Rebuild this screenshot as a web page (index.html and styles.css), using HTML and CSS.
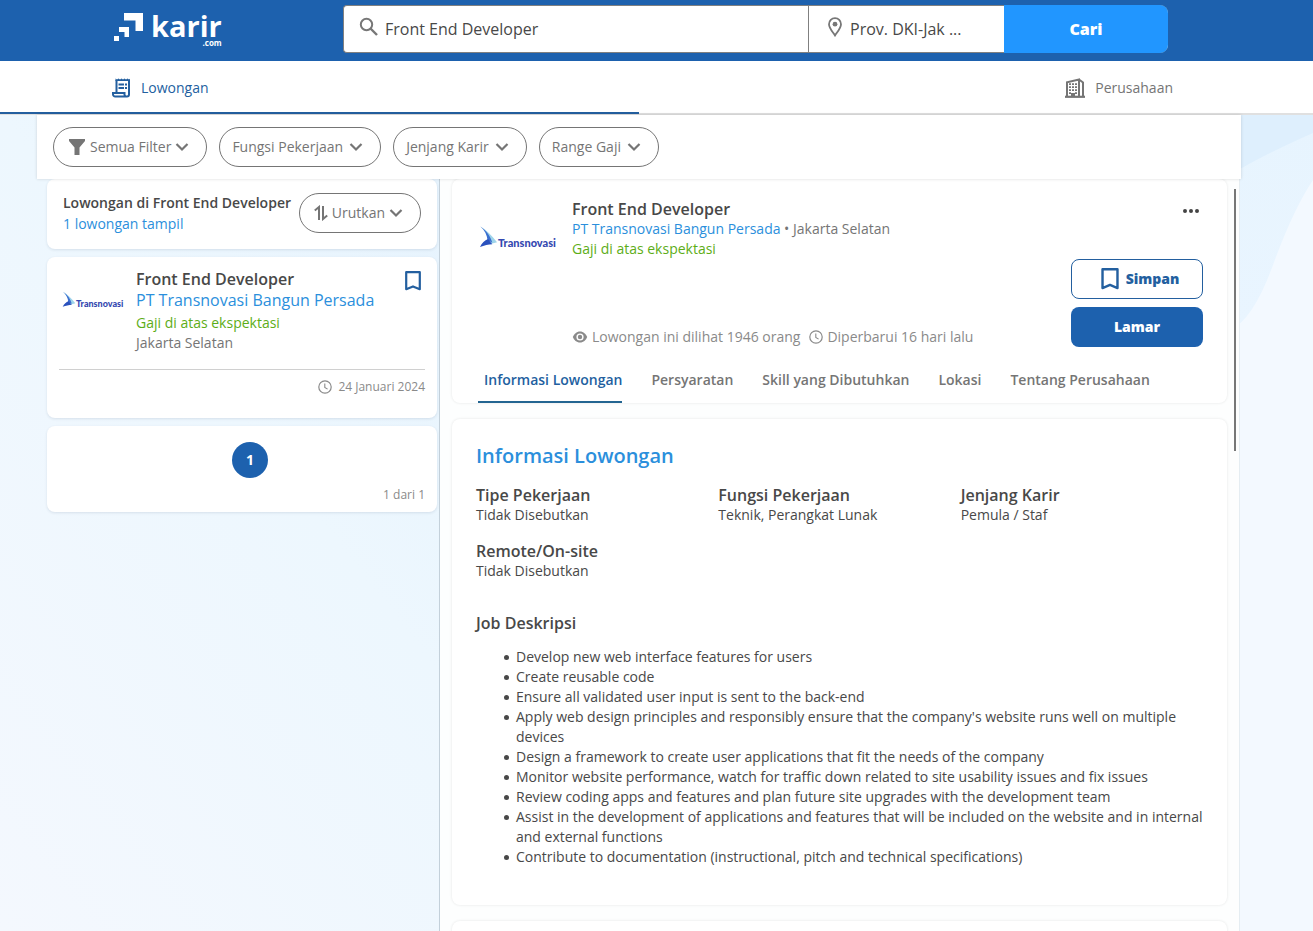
FILE: index.html
```html
<!DOCTYPE html>
<html lang="id">
<head>
<meta charset="utf-8">
<meta name="viewport" content="width=device-width, initial-scale=1">
<title>Karir.com - Lowongan Front End Developer</title>
<link rel="stylesheet" href="styles.css">
</head>
<body>
<svg class="symbols" aria-hidden="true">
  <symbol id="chevron" viewBox="0 0 14 14"><path d="M1.500 4l5.500 5.500L12.500 4" fill="none" stroke="currentColor" stroke-width="2.200"/></symbol>
  <symbol id="clock" viewBox="0 0 14 14"><circle cx="7" cy="7" r="6.200" fill="none" stroke="currentColor" stroke-width="1.200"/><path d="M6.800 3.400v4l2.800 1.700" fill="none" stroke="currentColor" stroke-width="1.100"/></symbol>
  <symbol id="bookmark" viewBox="0 0 16 20"><path d="M1.200 1.200h13.600v17L8 15.400l-6.800 2.800z" fill="none" stroke="currentColor" stroke-width="2.200" stroke-linejoin="round"/></symbol>
  <symbol id="company-mark" viewBox="0 0 20 24">
    <path d="M1.500 1C8 5 13.500 10.500 19 17.500L13 19C11 11 7 6 1.500 1z" fill="#9fd4ea"/>
    <path d="M1.500 1C8 5.500 12 11 14 18l-5-2.500C8.500 10 6 5 1.500 1z" fill="#3a6fd0"/>
    <path d="M1 22.500c2-4.500 5-7 8.500-8.500l4.500 5.500c-4 .2-8.500 1.200-13 3z" fill="#2a51bd"/>
  </symbol>
</svg>

<header class="topbar">
  <a class="brand" href="#" aria-label="karir.com">
    <svg class="brand-mark" viewBox="0 0 29 29" aria-hidden="true"><path d="M10 0h19v18h-7.500V7.500H10zM5 14h10v10h-4.500v-5H5zM0 23h5v5H0z" fill="#fff"/></svg>
    <span class="brand-name">karir<small class="brand-tld">.com</small></span>
  </a>
  <form class="search">
    <label class="field field-job">
      <svg width="20" height="20" viewBox="0 0 20 20" aria-hidden="true"><circle cx="7.500" cy="7.500" r="5.700" fill="none" stroke="#777" stroke-width="2"/><path d="M11.500 11.500l6.500 6.500" stroke="#777" stroke-width="2.400"/></svg>
      <input type="text" value="Front End Developer" aria-label="Pekerjaan">
    </label>
    <label class="field field-place">
      <svg width="16" height="20" viewBox="0 0 16 20" aria-hidden="true"><path d="M8 1.200a6 6 0 0 1 6 6c0 4-4 8-6 11.200C6 15.200 2 11.200 2 7.200a6 6 0 0 1 6-6z" fill="none" stroke="#777" stroke-width="1.800"/><circle cx="8" cy="7.200" r="2.400" fill="#777"/></svg>
      <input type="text" value="Prov. DKI-Jak ..." aria-label="Lokasi">
    </label>
    <button class="search-button" type="button">Cari</button>
  </form>
</header>

<nav class="tabs">
  <a class="tab tab-active" href="#">
    <svg width="20" height="20" viewBox="0 0 20 20" aria-hidden="true"><path d="M4.500 15V2M17 2v14.500a2 2 0 0 1-2 2H3.200A2.200 2.200 0 0 1 1 16.300V15h11.500v1.500a2 2 0 0 0 2.500 2" fill="none" stroke="currentColor" stroke-width="2"/><path d="M3.500 3V.5l1.500 1 1.500-1 1.500 1 1.500-1 1.500 1 1.500-1 1.500 1 1.500-1 1.500 1 1-.8V3z" fill="currentColor"/><path d="M6.500 6.500h5.500M6.500 10h5.500M13 6.500h2M13 10h2" stroke="currentColor" stroke-width="1.800"/></svg>
    Lowongan
  </a>
  <a class="tab tab-right" href="#">
    <svg width="22" height="20" viewBox="0 0 22 20" aria-hidden="true"><path d="M3 18V4.200L15 1.500V18M15 1.500l4 3V18" fill="none" stroke="currentColor" stroke-width="2"/><path d="M1 18.800h20" stroke="currentColor" stroke-width="2.200"/><path d="M5 6.200h8M5 9.200h8M5 12.200h8M5 15.200h2M11 15.200h2" stroke="currentColor" stroke-width="1.800" stroke-dasharray="2 1"/><path d="M7 18v-3h4v3z" fill="currentColor"/></svg>
    Perusahaan
  </a>
</nav>

<main class="page">
  <svg class="backdrop" viewBox="0 0 1313 816" preserveAspectRatio="none" aria-hidden="true">
    <defs>
      <linearGradient id="left-sky" x1="1" y1="0" x2="0" y2="1"><stop offset="0" stop-color="#e2f1fd"/><stop offset=".5" stop-color="#edf7fe"/><stop offset="1" stop-color="#f4f8fe"/></linearGradient>
      <linearGradient id="right-sky" x1="0" y1="0" x2="0" y2="1"><stop offset="0" stop-color="#e7f4fe"/><stop offset="1" stop-color="#e9f5ff"/></linearGradient>
    </defs>
    <rect width="640" height="816" fill="url(#left-sky)"/>
    <rect x="640" width="673" height="816" fill="#f3f9ff"/>
    <path d="M1230 0h83v65q-20 30-40 85t-43 65z" fill="url(#right-sky)"/>
    <path d="M1230 0h83v18q-50 22-83 42z" fill="#deeffd"/>
  </svg>

  <div class="filters">
    <button class="pill" type="button"><svg width="18" height="18" viewBox="0 0 18 18" aria-hidden="true"><path d="M1 1h16v2l-5.500 6.500V17h-5V9.500L1 3z" fill="currentColor"/></svg>Semua Filter<svg class="chev" aria-hidden="true"><use href="#chevron"/></svg></button>
    <button class="pill" type="button">Fungsi Pekerjaan<svg class="chev" aria-hidden="true"><use href="#chevron"/></svg></button>
    <button class="pill" type="button">Jenjang Karir<svg class="chev" aria-hidden="true"><use href="#chevron"/></svg></button>
    <button class="pill" type="button">Range Gaji<svg class="chev" aria-hidden="true"><use href="#chevron"/></svg></button>
  </div>

  <div class="columns">
    <section class="list">
      <div class="card list-head">
        <div class="list-title">
          <h2>Lowongan di Front End Developer</h2>
          <p class="link">1 lowongan tampil</p>
        </div>
        <button class="pill" type="button"><svg width="14" height="16" viewBox="0 0 14 16" aria-hidden="true"><path d="M5 15V2L.8 5.500M9 1v13l4.200-3.500" fill="none" stroke="currentColor" stroke-width="2"/></svg>Urutkan<svg class="chev" aria-hidden="true"><use href="#chevron"/></svg></button>
      </div>

      <article class="card job">
        <div class="job-body">
          <div class="company-logo company-logo-small"><svg aria-hidden="true"><use href="#company-mark"/></svg><span>Transnovasi</span></div>
          <div class="job-text">
            <h3>Front End Developer</h3>
            <a class="job-company" href="#">PT Transnovasi Bangun Persada</a>
            <p class="salary">Gaji di atas ekspektasi</p>
            <p class="muted">Jakarta Selatan</p>
          </div>
          <button class="icon-button" type="button" aria-label="Simpan lowongan"><svg width="16" height="20" aria-hidden="true"><use href="#bookmark"/></svg></button>
        </div>
        <p class="job-date"><svg width="14" height="14" aria-hidden="true"><use href="#clock"/></svg>24 Januari 2024</p>
      </article>

      <div class="card pager">
        <button class="page-number" type="button">1</button>
        <p class="page-total">1 dari 1</p>
      </div>
    </section>

    <section class="detail">
      <div class="panel summary">
        <div class="summary-main">
          <div class="company-logo"><svg aria-hidden="true"><use href="#company-mark"/></svg><span>Transnovasi</span></div>
          <div class="summary-text">
            <h1>Front End Developer</h1>
            <p class="muted"><a class="link" href="#">PT Transnovasi Bangun Persada</a> • Jakarta Selatan</p>
            <p class="salary">Gaji di atas ekspektasi</p>
            <p class="stats">
              <svg width="16" height="14" viewBox="0 0 16 14" aria-hidden="true"><path d="M8 1.500C4.500 1.500 2 4 .8 7 2 10 4.500 12.500 8 12.500S14 10 15.200 7C14 4 11.500 1.500 8 1.500z" fill="currentColor"/><circle cx="8" cy="7" r="3.600" fill="#fff"/><circle cx="8" cy="7" r="2.200" fill="currentColor"/></svg>
              <span>Lowongan ini dilihat 1946 orang</span>
              <svg width="14" height="14" aria-hidden="true"><use href="#clock"/></svg>
              <span>Diperbarui 16 hari lalu</span>
            </p>
          </div>
          <div class="actions">
            <button class="more" type="button" aria-label="Opsi lainnya"><svg width="18" height="4" viewBox="0 0 18 4" aria-hidden="true"><path d="M3 2h0M9 2h0M15 2h0" stroke="#444" stroke-width="4" stroke-linecap="round"/></svg></button>
            <button class="save" type="button"><svg width="18" height="22" aria-hidden="true"><use href="#bookmark"/></svg>Simpan</button>
            <button class="apply" type="button">Lamar</button>
          </div>
        </div>
        <nav class="sections">
          <a class="section-active" href="#info">Informasi Lowongan</a>
          <a href="#">Persyaratan</a>
          <a href="#">Skill yang Dibutuhkan</a>
          <a href="#">Lokasi</a>
          <a href="#">Tentang Perusahaan</a>
        </nav>
      </div>

      <div class="panel info" id="info">
        <h2>Informasi Lowongan</h2>
        <dl class="facts">
          <div><dt>Tipe Pekerjaan</dt><dd>Tidak Disebutkan</dd></div>
          <div><dt>Fungsi Pekerjaan</dt><dd>Teknik, Perangkat Lunak</dd></div>
          <div><dt>Jenjang Karir</dt><dd>Pemula / Staf</dd></div>
          <div><dt>Remote/On-site</dt><dd>Tidak Disebutkan</dd></div>
        </dl>
        <h3>Job Deskripsi</h3>
        <ul>
          <li>Develop new web interface features for users</li>
          <li>Create reusable code</li>
          <li>Ensure all validated user input is sent to the back-end</li>
          <li>Apply web design principles and responsibly ensure that the company's website runs well on multiple devices</li>
          <li>Design a framework to create user applications that fit the needs of the company</li>
          <li>Monitor website performance, watch for traffic down related to site usability issues and fix issues</li>
          <li>Review coding apps and features and plan future site upgrades with the development team</li>
          <li>Assist in the development of applications and features that will be included on the website and in internal and external functions</li>
          <li>Contribute to documentation (instructional, pitch and technical specifications)</li>
        </ul>
      </div>
      <div class="panel next"></div>
      <div class="scroll-thumb"></div>
    </section>
  </div>
</main>
</body>
</html>
```
FILE: styles.css
```css
* { box-sizing: border-box; }

body {
  margin: 0;
  height: 100vh;
  display: flex;
  flex-direction: column;
  overflow: hidden;
  font-family: "Open Sans", "Noto Sans", sans-serif;
  font-size: 14px;
  line-height: 20px;
  color: #484848;
  background: #f3f9ff;
}

h1, h2, h3, p, dl, dd, ul { margin: 0; }
a { color: inherit; text-decoration: none; }
button, input { font: inherit; color: inherit; }
button { cursor: pointer; background: none; border: 0; padding: 0; }
svg { flex: none; }

.symbols { position: absolute; width: 0; height: 0; }
.muted { color: #757575; }
.link { color: #2b8fdc; }
.salary { color: #5dad17; }

/* Top bar */
.topbar {
  display: flex;
  flex: none;
  height: 61px;
  padding: 5px 145px 8px 114px;
  background: #1d61ae;
}
.brand { display: flex; width: 229px; flex: none; gap: 8px; color: #fff; }
.brand-mark { width: 29px; height: 29px; margin-top: 8px; }
.brand-name {
  display: flex;
  flex-direction: column;
  align-items: flex-end;
  align-self: flex-start;
  font-size: 29px;
  line-height: 34px;
  font-weight: 700;
  padding-top: 4px;
}
.brand-tld { font-size: 8px; line-height: 8px; margin-top: -4px; font-weight: 700; }
.search {
  display: flex;
  flex: 1;
  min-width: 0;
  height: 48px;
  background: #fff;
  border: 1px solid #808080;
  border-right: 0;
  border-radius: 4px 8px 8px 4px;
  font-size: 16px;
}
.field { display: flex; align-items: center; min-width: 0; }
.field svg { margin-bottom: 5px; }
.field input { flex: 1; min-width: 0; border: 0; outline: 0; padding: 0; background: none; }
.field-job { flex: 1; gap: 6px; padding-left: 15px; }
.field-place { width: 196px; gap: 7px; padding-left: 18px; border-left: 1px solid #808080; }
.search-button {
  width: 164px;
  margin: -1px 0;
  color: #fff;
  background: #2196ff;
  font-weight: 800;
  border-radius: 0 8px 8px 0;
}

/* Main tabs */
.tabs {
  display: flex;
  flex: none;
  height: 54px;
  background: #fff;
  border-bottom: 2px solid #e0e0e0;
}
.tab { display: flex; flex: 1; align-items: center; gap: 9px; padding-top: 2px; color: #757575; }
.tab-active {
  flex: none;
  width: 639px;
  height: 53px;
  padding-left: 112px;
  color: #235f9f;
  border-bottom: 2px solid #235f9f;
}
.tab-right { justify-content: flex-end; padding-right: 140px; }

/* Page */
.page {
  position: relative;
  display: flex;
  flex-direction: column;
  flex: 1;
  min-height: 0;
  padding: 0 72px 0 37px;
}
.backdrop { position: absolute; inset: 0; width: 100%; height: 100%; }
.filters {
  position: relative;
  z-index: 1;
  display: flex;
  flex: none;
  gap: 12px;
  padding: 12px 16px;
  background: #fff;
  box-shadow: 0 0 3px #00000026;
}
.pill {
  display: flex;
  align-items: center;
  height: 40px;
  padding: 0 17px 0 12px;
  gap: 4px;
  border: 1px solid #757575;
  border-radius: 20px;
  color: #757575;
  background: #fff;
  white-space: nowrap;
}
.pill svg:first-child { margin-left: 2px; }
.chev { width: 14px; height: 14px; }

.columns { position: relative; display: flex; flex: 1; min-height: 0; }
.list {
  display: flex;
  flex-direction: column;
  gap: 8px;
  width: 403px;
  flex: none;
  padding: 0 2px 0 10px;
  border-right: 1px solid #c3d0da;
}
.card { background: #fff; border-radius: 8px; box-shadow: 0 1px 3px #00284d1c; }
.list-head {
  display: flex;
  align-items: flex-start;
  justify-content: space-between;
  height: 70px;
  padding: 14px 16px 0;
}
.list-title h2 { font-size: 14px; line-height: 20px; font-weight: 600; white-space: nowrap; }
.list-title p { line-height: 22px; }
.job { height: 161px; padding: 12px; }
.job-body { display: flex; height: 101px; padding-left: 3px; border-bottom: 1px solid #d0d0d0; }
.company-logo {
  display: flex;
  flex: none;
  align-self: flex-start;
  width: 78px;
  margin-top: 26px;
  color: #3448b0;
  font: 900 11px/12px Lato, sans-serif;
}
.company-logo svg { width: 19px; height: 24px; }
.company-logo span { padding-top: 12px; }
.company-logo-small { width: 62px; margin-top: 21px; font-size: 9px; }
.company-logo-small svg { width: 14px; height: 19px; }
.company-logo-small span { padding-top: 8px; }
.job-text { flex: 1; min-width: 0; margin-left: 12px; }
.job-text h3, .summary-text h1 { font-size: 16px; line-height: 21px; font-weight: 600; }
.job-company { display: block; font-size: 16px; line-height: 21px; margin-bottom: 2px; color: #2b8fdc; }
.icon-button { align-self: flex-start; height: 20px; margin: 2px 4px 0 0; color: #235f9f; }
.job-date {
  display: flex;
  align-items: center;
  justify-content: flex-end;
  gap: 6px;
  padding-top: 7px;
  font-size: 12px;
  color: #8a8a8a;
}
.pager { height: 86px; padding: 16px 12px 0 28px; }
.page-number {
  display: block;
  width: 36px;
  height: 36px;
  margin: 0 auto 7px;
  border-radius: 50%;
  color: #fff;
  background: #1d61ae;
  font-weight: 700;
}
.page-total { font-size: 12px; text-align: right; color: #8a8a8a; }

/* Detail column */
.detail {
  position: relative;
  display: flex;
  flex-direction: column;
  gap: 16px;
  flex: 1;
  min-width: 0;
  margin-right: 1px;
  padding: 0 12px;
  overflow: hidden;
  background: #fdfefe;
  border-right: 1px solid #e5edf2;
}
.panel { flex: none; background: #fff; border-radius: 8px; box-shadow: 0 0 3px #0000001a; }
.summary { padding: 20px 24px 0 27px; }
.summary-main { display: flex; }
.summary-text { flex: 1; min-width: 0; margin-left: 15px; }
.summary-text h1 { line-height: 20px; }
.stats { display: flex; align-items: center; gap: 4px; margin-top: 68px; color: #8a8a8a; white-space: nowrap; }
.stats span:first-of-type { margin-right: 5px; }
.actions { display: flex; flex-direction: column; width: 132px; flex: none; gap: 8px; }
.more { display: flex; align-items: center; justify-content: center; align-self: flex-end; height: 24px; width: 24px; margin-bottom: 28px; }
.save, .apply { height: 40px; border-radius: 8px; font-weight: 800; }
.save { display: flex; align-items: center; justify-content: center; gap: 7px; padding-left: 6px; color: #235f9f; border: 1px solid #235f9f; }
.apply { color: #fff; background: #1d61ae; }
.sections { display: flex; gap: 29px; padding-left: 5px; font-weight: 600; color: #757575; white-space: nowrap; }
.sections a { display: block; height: 56px; padding-top: 23px; }
.section-active { margin-left: -6px; padding-left: 6px; color: #235f9f; border-bottom: 2px solid #236591; }

.info { padding: 25px 24px 38px; }
.info h2 { font-size: 20px; line-height: 24px; font-weight: 600; color: #2b8fdc; }
.facts { display: grid; grid-template-columns: repeat(3, 1fr); gap: 16px 0; margin-top: 17px; }
.facts dt, .info h3 { font-size: 16px; line-height: 20px; font-weight: 600; }
.info h3 { margin: 32px 0 14px; }
.info ul { padding-left: 40px; list-style: none; }
.info li { position: relative; }
.info li::before {
  content: "";
  position: absolute;
  top: 8px;
  left: -12px;
  width: 5px;
  height: 5px;
  border-radius: 50%;
  background: #484848;
}
.next { height: 80px; }
.scroll-thumb {
  position: absolute;
  top: 10px;
  right: 3px;
  width: 2px;
  height: 262px;
  background: #777;
}
```
